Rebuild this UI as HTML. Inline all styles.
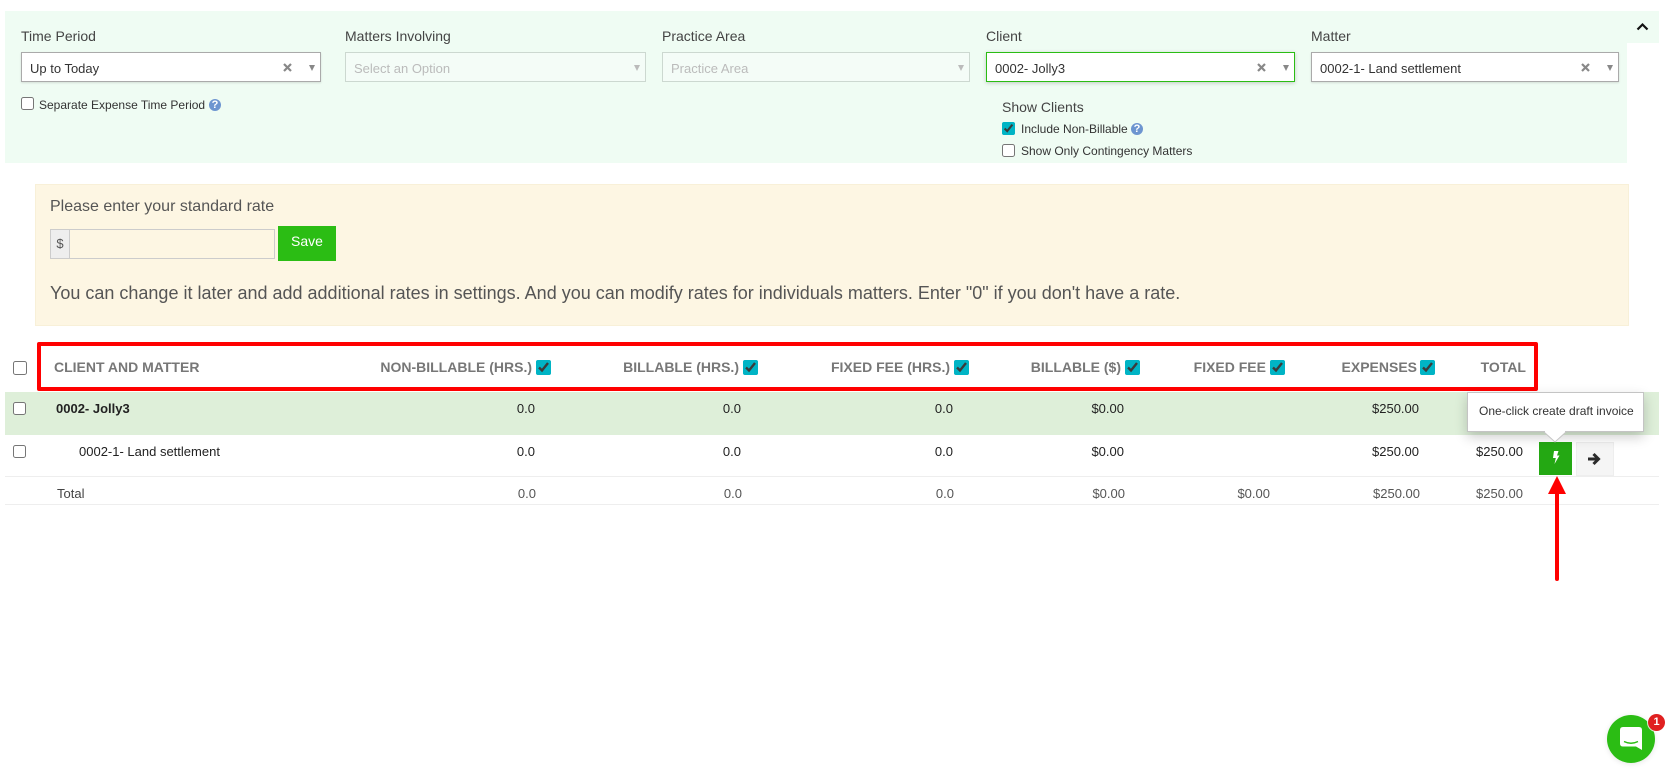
<!DOCTYPE html>
<html lang="en"><head><meta charset="utf-8"><title>Invoices</title>
<style>
html,body{margin:0;padding:0;background:#fff}
body{width:1667px;height:783px;position:relative;overflow:hidden;font-family:"Liberation Sans",Arial,sans-serif;color:#333}
.a{position:absolute}
.t{position:absolute;line-height:20px;white-space:nowrap}
.lab{font-size:14px;color:#444}
.sel{position:absolute;top:52px;height:30px;box-sizing:border-box;background:#fff;border:1px solid #aaa;box-shadow:0 1px 2px rgba(0,0,0,.12)}
.sel .v{position:absolute;left:8px;top:6px;line-height:20px;font-size:13px;color:#333;white-space:nowrap}
.sel .x{position:absolute;right:28px;top:10px;width:9px;height:9px}
.sel .c{position:absolute;right:5px;top:12px;width:0;height:0;border-left:3px solid transparent;border-right:3px solid transparent;border-top:6px solid #888}
.dis{background:#f4fcf7;border-color:#ccd8d0;box-shadow:none}
.dis .v{color:#bbb}.dis .c{border-top-color:#bbb}
input[type=checkbox]{position:absolute;margin:0;width:13px;height:13px;accent-color:#00b4c5}
.sm{font-size:12px;color:#333}
.help{position:absolute;width:12px;height:12px;border-radius:50%;background:#6d95d0;color:#fff;font-size:11px;font-weight:bold;line-height:12px;text-align:center}
.h{position:absolute;top:357px;line-height:20px;font-size:14px;font-weight:bold;color:#777;white-space:nowrap}
.n{position:absolute;line-height:20px;font-size:13px;white-space:nowrap;text-align:right}
.r1{top:399px;color:#222}.r2{top:442px;color:#222}.r3{top:484px;color:#555}
</style></head><body>

<div class="a" style="left:5px;top:11px;width:1622px;height:152px;background:#effcf3"></div>
<div class="a" style="left:1627px;top:11px;width:32px;height:32px;background:#effcf3"></div>
<svg class="a" style="left:1636px;top:22px" width="13" height="9" viewBox="0 0 13 9"><path d="M1.5 7.5 6.5 2.5 11.5 7.5" fill="none" stroke="#111" stroke-width="2.2"/></svg>

<div class="t lab" style="left:21px;top:26px">Time Period</div>
<div class="t lab" style="left:345px;top:26px">Matters Involving</div>
<div class="t lab" style="left:662px;top:26px">Practice Area</div>
<div class="t lab" style="left:986px;top:26px">Client</div>
<div class="t lab" style="left:1311px;top:26px">Matter</div>

<div class="sel" style="left:21px;width:300px"><span class="v">Up to Today</span><svg class="x" viewBox="0 0 9 9"><path d="M1 1 8 8M8 1 1 8" stroke="#888" stroke-width="2.2"/></svg><span class="c"></span></div>
<div class="sel dis" style="left:345px;width:301px"><span class="v">Select an Option</span><span class="c"></span></div>
<div class="sel dis" style="left:662px;width:308px"><span class="v">Practice Area</span><span class="c"></span></div>
<div class="sel" style="left:986px;width:309px;border-color:#2bbd14;box-shadow:0 1px 4px rgba(0,0,0,.2)"><span class="v">0002- Jolly3</span><svg class="x" viewBox="0 0 9 9"><path d="M1 1 8 8M8 1 1 8" stroke="#888" stroke-width="2.2"/></svg><span class="c"></span></div>
<div class="sel" style="left:1311px;width:308px"><span class="v">0002-1- Land settlement</span><svg class="x" viewBox="0 0 9 9"><path d="M1 1 8 8M8 1 1 8" stroke="#888" stroke-width="2.2"/></svg><span class="c"></span></div>

<input type="checkbox" style="left:21px;top:97px">
<div class="t sm" style="left:39px;top:95px">Separate Expense Time Period</div>
<div class="help" style="left:209px;top:99px">?</div>

<div class="t lab" style="left:1002px;top:97px">Show Clients</div>
<input type="checkbox" checked style="left:1002px;top:122px">
<div class="t sm" style="left:1021px;top:119px">Include Non-Billable</div>
<div class="help" style="left:1131px;top:123px">?</div>
<input type="checkbox" style="left:1002px;top:144px">
<div class="t sm" style="left:1021px;top:141px">Show Only Contingency Matters</div>

<div class="a" style="left:35px;top:184px;width:1594px;height:142px;box-sizing:border-box;background:#fdf6e3;border:1px solid #f8f0d8"></div>
<div class="t" style="left:50px;top:197px;font-size:16px;color:#555">Please enter your standard rate</div>
<div class="a" style="left:50px;top:229px;width:225px;height:30px;box-sizing:border-box;border:1px solid #ccc"></div>
<div class="a" style="left:50px;top:229px;width:20px;height:30px;box-sizing:border-box;background:#eee;border:1px solid #ccc;text-align:center;font-size:13px;line-height:28px;color:#555">$</div>
<div class="a" style="left:278px;top:226px;width:58px;height:35px;background:#2bbd14;color:#fff;text-align:center;font-size:14px;line-height:31px">Save</div>
<div class="t" style="left:50px;top:283px;font-size:18px;color:#555">You can change it later and add additional rates in settings. And you can modify rates for individuals matters. Enter "0" if you don't have a rate.</div>

<div class="a" style="left:5px;top:392px;width:1654px;height:43px;background:#deefd9"></div>
<div class="a" style="left:5px;top:476px;width:1654px;height:1px;background:#eee"></div>
<div class="a" style="left:5px;top:504px;width:1654px;height:1px;background:#eee"></div>

<div class="a" style="left:37px;top:342px;width:1501px;height:49px;box-sizing:border-box;border:4px solid #f00;border-radius:2px"></div>

<input type="checkbox" style="left:13px;top:361px;width:14px;height:14px">
<div class="h" style="left:54px">CLIENT AND MATTER</div>
<div class="h" style="right:1135px">NON-BILLABLE (HRS.)</div><input type="checkbox" checked style="left:536px;top:360px;width:15px;height:15px">
<div class="h" style="right:928px">BILLABLE (HRS.)</div><input type="checkbox" checked style="left:743px;top:360px;width:15px;height:15px">
<div class="h" style="right:717px">FIXED FEE (HRS.)</div><input type="checkbox" checked style="left:954px;top:360px;width:15px;height:15px">
<div class="h" style="right:546px">BILLABLE ($)</div><input type="checkbox" checked style="left:1125px;top:360px;width:15px;height:15px">
<div class="h" style="right:401px">FIXED FEE</div><input type="checkbox" checked style="left:1270px;top:360px;width:15px;height:15px">
<div class="h" style="right:250px">EXPENSES</div><input type="checkbox" checked style="left:1420px;top:360px;width:15px;height:15px">
<div class="h" style="right:141px">TOTAL</div>

<input type="checkbox" style="left:13px;top:402px">
<div class="t" style="left:56px;top:399px;font-size:13px;font-weight:bold;color:#222">0002- Jolly3</div>
<div class="n r1" style="right:1132px">0.0</div><div class="n r1" style="right:926px">0.0</div><div class="n r1" style="right:714px">0.0</div><div class="n r1" style="right:543px">$0.00</div><div class="n r1" style="right:248px">$250.00</div>

<input type="checkbox" style="left:13px;top:445px">
<div class="t" style="left:79px;top:442px;font-size:13px;color:#222">0002-1- Land settlement</div>
<div class="n r2" style="right:1132px">0.0</div><div class="n r2" style="right:926px">0.0</div><div class="n r2" style="right:714px">0.0</div><div class="n r2" style="right:543px">$0.00</div><div class="n r2" style="right:248px">$250.00</div><div class="n r2" style="right:144px">$250.00</div>

<div class="t" style="left:57px;top:484px;font-size:13px;color:#444">Total</div>
<div class="n r3" style="right:1131px">0.0</div><div class="n r3" style="right:925px">0.0</div><div class="n r3" style="right:713px">0.0</div><div class="n r3" style="right:542px">$0.00</div><div class="n r3" style="right:397px">$0.00</div><div class="n r3" style="right:247px">$250.00</div><div class="n r3" style="right:144px">$250.00</div>

<div class="a" style="left:1539px;top:442px;width:33px;height:33px;background:#24a813"></div>
<svg class="a" style="left:1550px;top:450px" width="12" height="15" viewBox="0 0 12 15"><path d="M4 1H8.5L7 5.5H9.5L4.5 14 5.8 8H3Z" fill="#fff"/></svg>
<div class="a" style="left:1576px;top:442px;width:38px;height:34px;box-sizing:border-box;background:#f5f5f5;border:1px solid #eee"></div>
<svg class="a" style="left:1587px;top:452px" width="14" height="14" viewBox="0 0 14 14"><path d="M1 7H11M6.5 2 11.5 7 6.5 12" fill="none" stroke="#2b2b2b" stroke-width="3"/></svg>

<div class="a" style="left:1467px;top:392px;width:177px;height:40px;box-sizing:border-box;background:#fff;border:1px solid #c4c4c4;box-shadow:0 5px 12px rgba(0,0,0,.2)"></div>
<svg class="a" style="left:1544px;top:431px" width="22" height="12" viewBox="0 0 22 12"><path d="M0 1 11 11 22 1" fill="#fff" stroke="#c4c4c4"/><path d="M1 0H21V1H1Z" fill="#fff"/></svg>
<div class="t" style="left:1479px;top:401px;font-size:12px;color:#333">One-click create draft invoice</div>

<svg class="a" style="left:1545px;top:474px" width="24" height="110" viewBox="0 0 24 110"><path d="M12 2 21 20H3Z" fill="#f00"/><path d="M12 18V105" stroke="#f00" stroke-width="4" stroke-linecap="round"/></svg>

<div class="a" style="left:1607px;top:715px;width:48px;height:48px;border-radius:50%;background:#2bbd14;box-shadow:0 1px 6px rgba(0,0,0,.1)"></div>
<svg class="a" style="left:1619px;top:726px" width="24" height="25" viewBox="0 0 24 25"><path d="M4 1H20Q23 1 23 4V24L17 20.5H4Q1 20.5 1 17.5V4Q1 1 4 1Z" fill="#fff"/><path d="M5 15.5Q12 19 19 15.5" fill="none" stroke="#2bbd14" stroke-width="1.4"/></svg>
<div class="a" style="left:1648px;top:714px;width:17px;height:17px;border-radius:50%;background:#e02020;color:#fff;font-size:11px;font-weight:bold;line-height:17px;text-align:center;box-shadow:0 0 0 1px rgba(255,255,255,.8)">1</div>
</body></html>
